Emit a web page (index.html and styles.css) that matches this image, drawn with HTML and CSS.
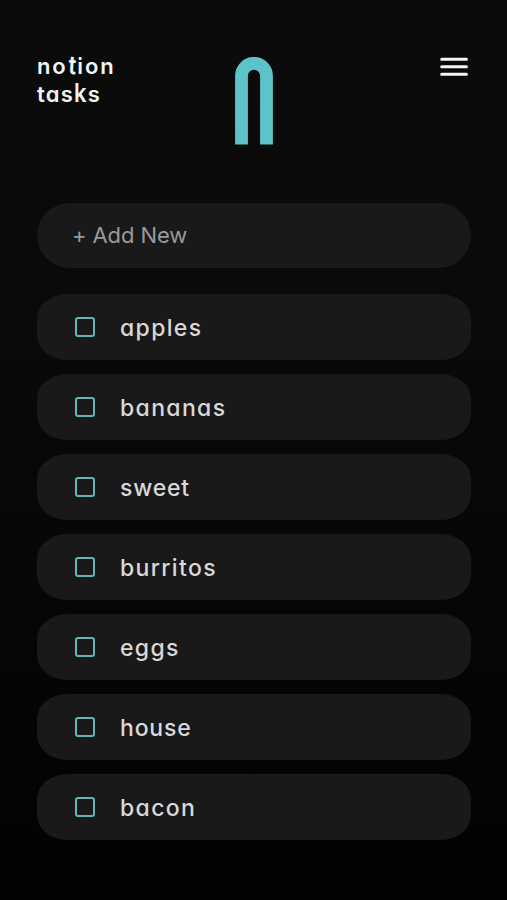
FILE: index.html
```html
<!DOCTYPE html>
<html lang="en">
<head>
<meta charset="utf-8">
<title>notion tasks</title>
<link rel="stylesheet" href="styles.css">
</head>
<body>
<div class="app">
  <header class="header">
    <h1 class="wordmark"><span class="line">no<span class="tall">t</span>ion</span><span class="line second">tas<span class="kay">k</span>s</span></h1>
    <svg class="arch" width="38" height="88" viewBox="0 0 38 88" aria-hidden="true"><path d="M6.5 87.5V18.8a12.5 12.5 0 0 1 25 0V87.5" fill="none" stroke="#5bc3c9" stroke-width="12.8"/></svg>
    <svg class="menu" width="28" height="20" viewBox="0 0 28 20" aria-hidden="true"><path d="M1.7 2.3H26.4M1.7 9.8H26.4M1.7 17.3H26.4" stroke="#f4f6f5" stroke-width="3" stroke-linecap="round"/></svg>
  </header>
  <main>
    <div class="add">+ Add New</div>
    <ul class="tasks">
      <li class="task"><span class="box"></span><span class="name wide">apples</span></li>
      <li class="task"><span class="box"></span><span class="name wide">bananas</span></li>
      <li class="task"><span class="box"></span><span class="name">sweet</span></li>
      <li class="task"><span class="box"></span><span class="name wide">burritos</span></li>
      <li class="task"><span class="box"></span><span class="name wide">eggs</span></li>
      <li class="task"><span class="box"></span><span class="name">house</span></li>
      <li class="task"><span class="box"></span><span class="name wide">bacon</span></li>
    </ul>
  </main>
</div>
</body>
</html>
```
FILE: styles.css
```css
* { box-sizing: border-box; }
body { margin: 0; background: #050505; }
.app {
  height: 900px;
  padding: 50px 36px 0 37px;
  background: linear-gradient(#0b0b0b, #090909 40%, #020202);
  font-family: Inter, "Liberation Sans", sans-serif;
  overflow: hidden;
}
.header {
  display: grid;
  grid-template-columns: 198px 1fr 28px;
  align-items: start;
  height: 153px;
  padding-right: 3px;
}
.wordmark {
  margin: 2px 0 0;
  color: #eff4f3;
  font-size: 22px;
  font-weight: 600;
  font-feature-settings: "cv11" 1;
  line-height: 28px;
  letter-spacing: 1.9px;
}
.line { display: block; }
.second { letter-spacing: 1.2px; }
.tall, .kay { display: inline-block; transform-origin: 50% 75%; }
.tall { transform: scaleY(1.15) rotate(4deg); }
.kay { transform: scaleY(1.15); }
.arch { margin-top: 7px; }
.menu { margin-top: 7px; }
.add {
  height: 65px;
  padding-left: 35px;
  border-radius: 33px;
  background: #191919;
  color: #999;
  font-size: 22px;
  line-height: 65px;
  letter-spacing: -0.1px;
}
.tasks {
  display: grid;
  gap: 14px;
  margin: 26px 0 0;
  padding: 0;
  list-style: none;
}
.task {
  display: flex;
  align-items: center;
  height: 66px;
  padding-left: 38px;
  border-radius: 30px / 25px;
  background: #191919;
}
.box {
  width: 20px;
  height: 20px;
  margin-right: 25px;
  border: 2px solid #65b5b7;
  border-radius: 3px;
}
.name {
  padding-top: 1px;
  color: #d8d8d8;
  font-size: 23px;
  font-weight: 500;
  font-feature-settings: "cv11" 1;
  line-height: 30px;
  letter-spacing: 0.8px;
}
.wide { letter-spacing: 1.35px; }
```
